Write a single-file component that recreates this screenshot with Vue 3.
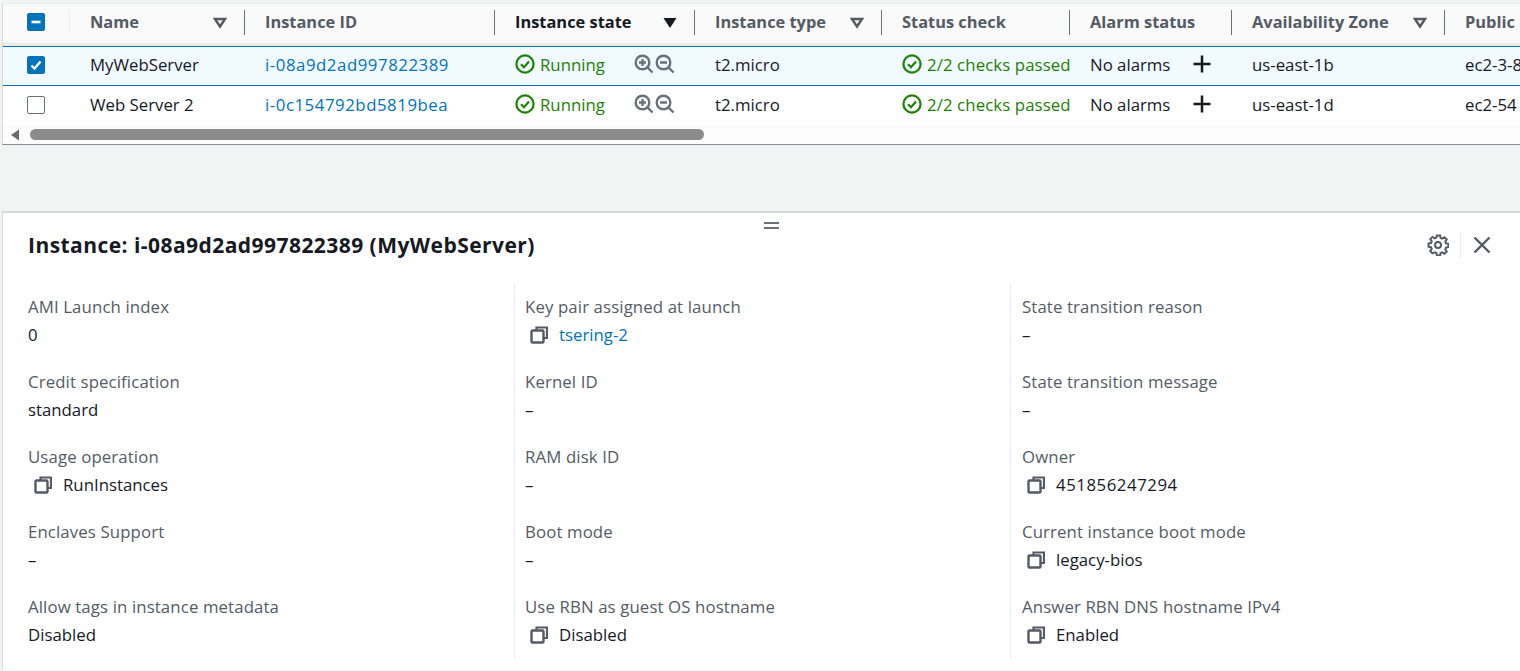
<script setup>
const columns = [
  { label: 'Name', sort: true },
  { label: 'Instance ID' },
  { label: 'Instance state', sort: true, active: true },
  { label: 'Instance type', sort: true },
  { label: 'Status check' },
  { label: 'Alarm status' },
  { label: 'Availability Zone', sort: true },
  { label: 'Public' }
]

const instances = [
  { name: 'MyWebServer', id: 'i-08a9d2ad997822389', zone: 'us-east-1b', dns: 'ec2-3-8', selected: true },
  { name: 'Web Server 2', id: 'i-0c154792bd5819bea', zone: 'us-east-1d', dns: 'ec2-54', selected: false }
]

const details = [
  [
    { label: 'AMI Launch index', value: '0' },
    { label: 'Credit specification', value: 'standard' },
    { label: 'Usage operation', value: 'RunInstances', copy: true },
    { label: 'Enclaves Support', value: '–' },
    { label: 'Allow tags in instance metadata', value: 'Disabled' }
  ],
  [
    { label: 'Key pair assigned at launch', value: 'tsering-2', copy: true, link: true },
    { label: 'Kernel ID', value: '–' },
    { label: 'RAM disk ID', value: '–' },
    { label: 'Boot mode', value: '–' },
    { label: 'Use RBN as guest OS hostname', value: 'Disabled', copy: true }
  ],
  [
    { label: 'State transition reason', value: '–' },
    { label: 'State transition message', value: '–' },
    { label: 'Owner', value: '451856247294', copy: true, digits: true },
    { label: 'Current instance boot mode', value: 'legacy-bios', copy: true },
    { label: 'Answer RBN DNS hostname IPv4', value: 'Enabled', copy: true }
  ]
]
</script>

<template>
  <div class="page">
    <section class="table">
      <div class="row head">
        <div class="cell check-cell">
          <span class="box on">
            <svg width="12" height="12" viewBox="0 0 12 12"><path d="M1.500 6h9" stroke="#fff" stroke-width="2.600" fill="none" /></svg>
          </span>
          <i class="sep faint"></i>
        </div>
        <div v-for="col in columns" :key="col.label" class="cell" :class="{ active: col.active }">
          <span>{{ col.label }}</span>
          <svg v-if="col.sort" class="sort" width="14" height="12" viewBox="0 0 14 12">
            <path v-if="col.active" d="M0.500 1h13L7 11z" fill="#16191f" />
            <path v-else d="M2 2h10L7 9.500z" fill="none" stroke="#545b64" stroke-width="2.400" />
          </svg>
          <i class="sep"></i>
        </div>
      </div>

      <div v-for="item in instances" :key="item.id" class="row body" :class="{ selected: item.selected }">
        <div class="cell check-cell">
          <span class="box" :class="{ on: item.selected }">
            <svg v-if="item.selected" width="14" height="14" viewBox="0 0 14 14"><path d="M2.500 7.500l3 3 6-7" stroke="#fff" stroke-width="2.400" fill="none" /></svg>
          </span>
        </div>
        <div class="cell">{{ item.name }}</div>
        <div class="cell link digits">{{ item.id }}</div>
        <div class="cell ok state">
          <svg class="ok-icon" width="20" height="20" viewBox="0 0 20 20">
            <circle cx="10" cy="10" r="8.600" fill="none" stroke="#1d8102" stroke-width="2.200" />
            <path d="M6 10.200l3 3 5-5.600" fill="none" stroke="#1d8102" stroke-width="2.200" />
          </svg>
          <span>Running</span>
          <span class="zooms">
            <svg width="20" height="20" viewBox="0 0 20 20">
              <circle cx="8.500" cy="8.500" r="6.800" fill="none" stroke="#687078" stroke-width="2.400" />
              <path d="M13.500 13.500l5 5M5 8.500h7M8.500 5v7" fill="none" stroke="#687078" stroke-width="2.400" />
            </svg>
            <svg width="20" height="20" viewBox="0 0 20 20">
              <circle cx="8.500" cy="8.500" r="6.800" fill="none" stroke="#687078" stroke-width="2.400" />
              <path d="M13.500 13.500l5 5M5 8.500h7" fill="none" stroke="#687078" stroke-width="2.400" />
            </svg>
          </span>
        </div>
        <div class="cell">t2.micro</div>
        <div class="cell ok status">
          <svg class="ok-icon" width="20" height="20" viewBox="0 0 20 20">
            <circle cx="10" cy="10" r="8.600" fill="none" stroke="#1d8102" stroke-width="2.200" />
            <path d="M6 10.200l3 3 5-5.600" fill="none" stroke="#1d8102" stroke-width="2.200" />
          </svg>
          <span>2/2 checks passed</span>
        </div>
        <div class="cell alarm">
          <span>No alarms</span>
          <svg width="20" height="20" viewBox="0 0 20 20"><path d="M10 1.500v17M1.500 10h17" stroke="#16191f" stroke-width="2.500" fill="none" /></svg>
        </div>
        <div class="cell">{{ item.zone }}</div>
        <div class="cell">{{ item.dns }}</div>
      </div>

      <div class="scroller">
        <svg width="10" height="12" viewBox="0 0 10 12"><path d="M9 0.500v11L1 6z" fill="#6b6b6b" /></svg>
        <div class="thumb"></div>
      </div>
    </section>

    <div class="gap"></div>

    <section class="panel">
      <div class="handle"></div>
      <header class="panel-head">
        <h2>Instance: i-08a9d2ad997822389 (MyWebServer)</h2>
        <div class="panel-tools">
          <svg width="22" height="22" viewBox="0 0 22 22">
            <path d="M9.400 2h3.200l.5 2.500 1.700.7 2.200-1.400 2.200 2.200-1.400 2.200.7 1.700 2.500.5v3.200l-2.500.5-.7 1.700 1.400 2.200-2.200 2.200-2.200-1.400-1.700.7-.5 2.500H9.400l-.5-2.500-1.700-.7L5 19.800l-2.200-2.200 1.400-2.200-.7-1.700L1 13.200V10l2.500-.5.7-1.700L2.800 5.600 5 3.400l2.200 1.400 1.700-.7z" transform="translate(.5 -.5)" fill="none" stroke="#545b64" stroke-width="2" />
            <circle cx="11" cy="11" r="3" fill="none" stroke="#545b64" stroke-width="2" />
          </svg>
          <i class="tool-sep"></i>
          <svg width="20" height="20" viewBox="0 0 20 20"><path d="M2.500 2.500l15 15M17.500 2.500l-15 15" stroke="#545b64" stroke-width="2.400" fill="none" /></svg>
        </div>
      </header>
      <div class="details">
        <div v-for="(col, i) in details" :key="i" class="detail-col">
          <div v-for="d in col" :key="d.label" class="detail">
            <div class="detail-label">{{ d.label }}</div>
            <div class="detail-value" :class="{ link: d.link, digits: d.digits }">
              <svg v-if="d.copy" class="copy" width="18" height="18" viewBox="0 0 18 18">
                <path d="M6.500 4V1.500H17V12h-3" fill="none" stroke="#545b64" stroke-width="2.200" />
                <rect x="1.500" y="4.500" width="12" height="12" fill="none" stroke="#545b64" stroke-width="2.400" rx="1" />
              </svg>
              <span>{{ d.value }}</span>
            </div>
          </div>
        </div>
      </div>
    </section>
  </div>
</template>

<style scoped>
.page {
  width: 1520px;
  height: 671px;
  overflow: hidden;
  background: #f2f3f3;
  padding: 3px 0 0 2px;
  box-sizing: border-box;
  font-family: "Open Sans", "Noto Sans", sans-serif;
  font-size: 16.800px;
  color: #16191f;
}

.table {
  background: #fff;
  border-left: 1px solid #d5dbdb;
  border-top: 1px solid #eaeded;
  border-bottom: 2px solid #879596;
  height: 142px;
  box-sizing: border-box;
}

.row {
  display: grid;
  grid-template-columns: 67px 175px 250px 200px 187px 188px 162px 213px 120px;
  width: 1600px;
}

.cell {
  position: relative;
  display: flex;
  align-items: center;
  padding-left: 20px;
  white-space: nowrap;
}

.head {
  height: 39px;
  background: #fafafa;
  font-size: 16.400px;
  font-weight: 700;
  color: #545b64;
  border-bottom: 3px solid #eaeded;
  box-sizing: content-box;
}

.head .cell {
  padding-bottom: 5px;
}

.head .check-cell {
  padding-bottom: 3px;
}

.head .active {
  color: #16191f;
}

.sep {
  position: absolute;
  right: 0;
  top: 6px;
  height: 25px;
  width: 1px;
  background: #687078;
}

.sep.faint {
  background: #eaeded;
}

.sort {
  position: absolute;
  right: 18px;
  top: 13px;
}

.check-cell {
  padding-left: 24px;
}

.box {
  width: 16px;
  height: 16px;
  border: 1px solid #687078;
  border-radius: 2px;
  display: flex;
  align-items: center;
  justify-content: center;
  background: #fff;
}

.box.on {
  background: #0073bb;
  border-color: #0073bb;
}

.body {
  height: 40px;
  box-sizing: border-box;
  border-top: 1px solid transparent;
  border-bottom: 1px solid transparent;
  margin-bottom: -1px;
}

.body .cell {
  padding-bottom: 2px;
}

.body .check-cell {
  padding-bottom: 1px;
}

.selected {
  background: #f1faff;
  border-top-color: #0073bb;
  border-bottom-color: #0073bb;
  position: relative;
}

.selected .cell {
  padding-bottom: 4px;
}

.selected .check-cell {
  padding-bottom: 3px;
}

.link {
  color: #0073bb;
}

.digits {
  letter-spacing: 0.55px;
}

.ok {
  color: #1d8102;
}

.ok-icon {
  flex: none;
  margin-right: 5px;
}

.state .zooms {
  display: flex;
  gap: 1px;
  margin-left: 29px;
}

.status {
  letter-spacing: 0.1px;
}

.alarm span {
  width: 102px;
}

.scroller {
  display: flex;
  align-items: center;
  height: 19px;
  padding-left: 7px;
  gap: 10px;
  margin-top: 1px;
  background: #fcfcfc;
}

.thumb {
  width: 674px;
  height: 11px;
  border-radius: 6px;
  background: #8c8c8c;
}

.gap {
  height: 66px;
}

.panel {
  position: relative;
  height: 459px;
  background: #fff;
  border-left: 1px solid #d5dbdb;
  border-top: 2px solid #d5dbdb;
  box-sizing: border-box;
}

.handle {
  position: absolute;
  left: 761px;
  top: 9px;
  width: 15px;
  height: 7px;
  border-top: 2px solid #687078;
  border-bottom: 2px solid #687078;
  box-sizing: border-box;
}

.panel-head {
  display: flex;
  align-items: center;
  justify-content: space-between;
  height: 71px;
  padding: 0 28px 7px 25px;
  box-sizing: border-box;
}

h2 {
  margin: 0;
  font-size: 21px;
  font-weight: 700;
  letter-spacing: 0.45px;
  color: #16191f;
}

.panel-tools {
  display: flex;
  align-items: center;
  gap: 11px;
}

.tool-sep {
  width: 1px;
  height: 28px;
  background: #eaeded;
}

.details {
  display: grid;
  grid-template-columns: 511px 496px 1fr;
  height: 375px;
}

.detail-col {
  padding: 11px 0 0 25px;
  border-left: 1px solid #eaeded;
}

.detail-col + .detail-col {
  padding-left: 10px;
}

.detail-col:first-child {
  border-left: none;
}

.detail-col:last-child {
  padding-left: 11px;
}

.detail {
  height: 75px;
}

.detail:last-child {
  height: auto;
}

.detail-label {
  color: #545b64;
  line-height: 24px;
  letter-spacing: 0.12px;
  margin-bottom: 4px;
}

.detail-value {
  line-height: 24px;
  display: flex;
  align-items: center;
}

.copy {
  margin: 0 11px 0 6px;
  flex: none;
}

.detail-col + .detail-col .copy {
  margin-left: 5px;
}
</style>
